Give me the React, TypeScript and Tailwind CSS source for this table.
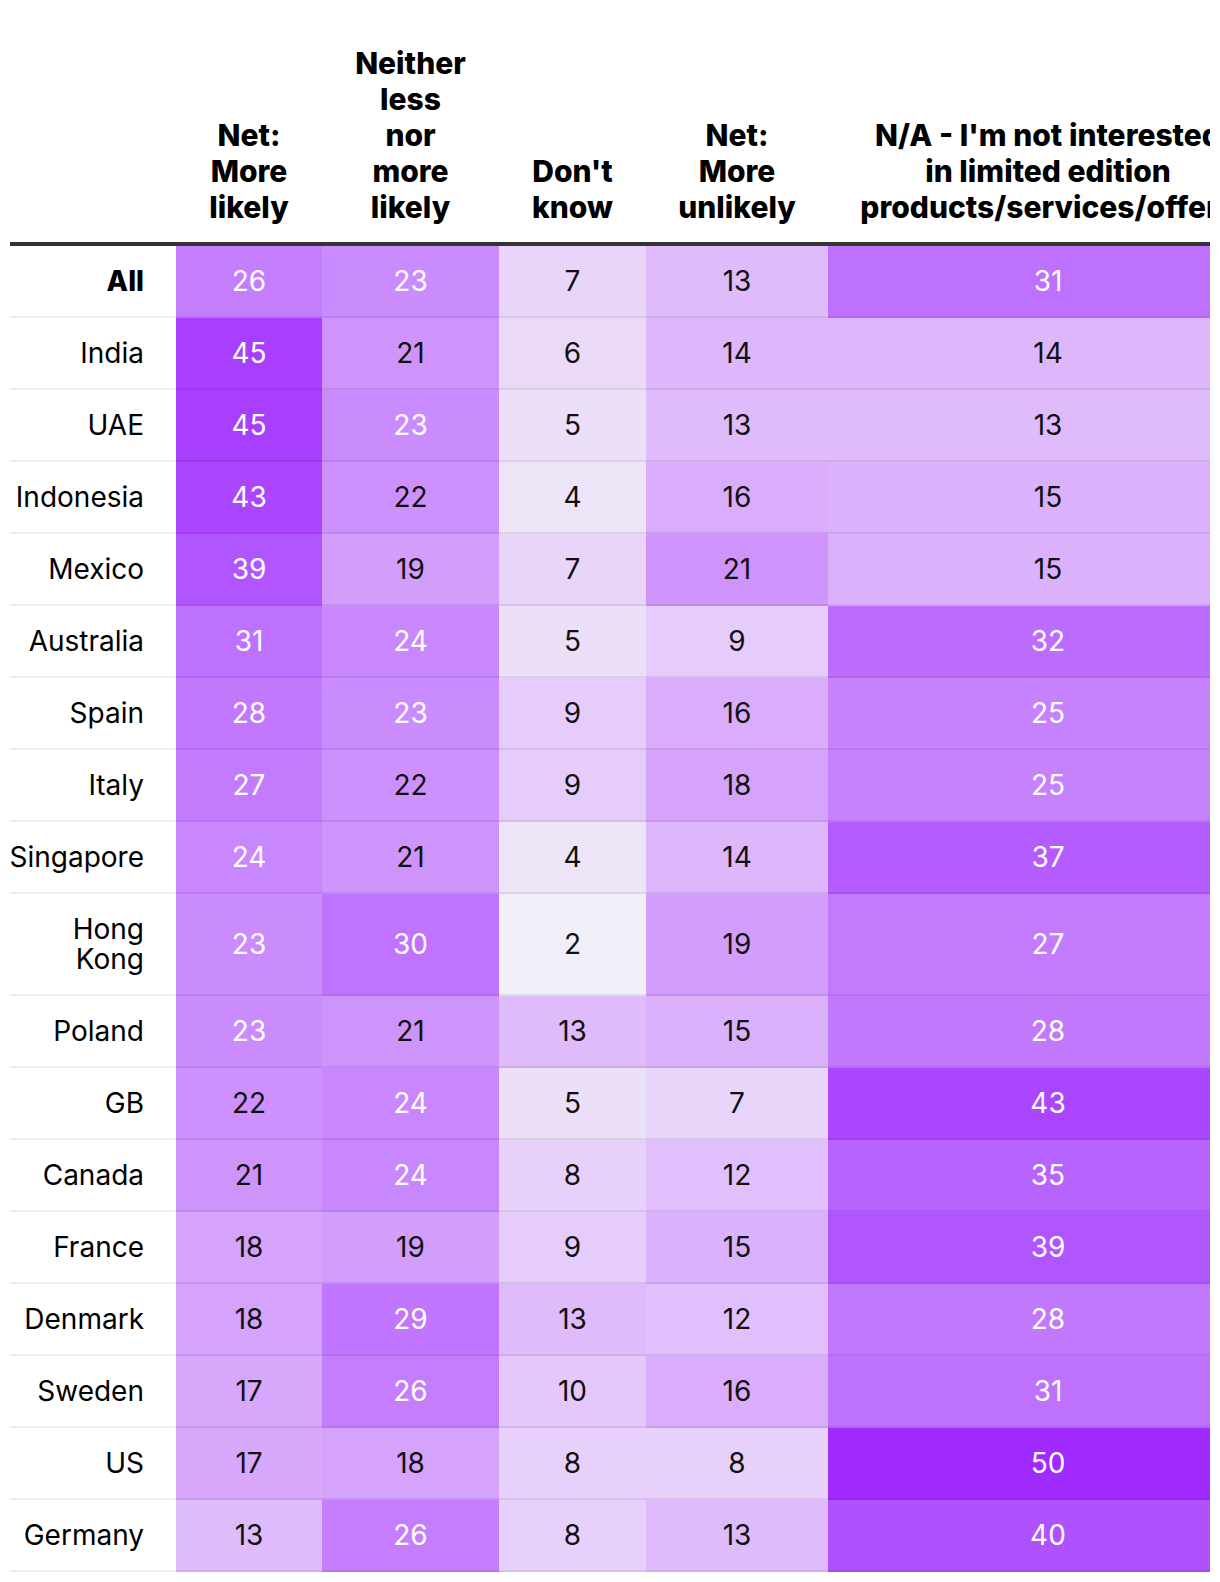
type Row = { label: string; bold?: boolean; tall?: boolean; values: number[] }

const rows: Row[] = [
  { label: 'All', bold: true, values: [26, 23, 7, 13, 31] },
  { label: 'India', values: [45, 21, 6, 14, 14] },
  { label: 'UAE', values: [45, 23, 5, 13, 13] },
  { label: 'Indonesia', values: [43, 22, 4, 16, 15] },
  { label: 'Mexico', values: [39, 19, 7, 21, 15] },
  { label: 'Australia', values: [31, 24, 5, 9, 32] },
  { label: 'Spain', values: [28, 23, 9, 16, 25] },
  { label: 'Italy', values: [27, 22, 9, 18, 25] },
  { label: 'Singapore', values: [24, 21, 4, 14, 37] },
  { label: 'Hong\nKong', tall: true, values: [23, 30, 2, 19, 27] },
  { label: 'Poland', values: [23, 21, 13, 15, 28] },
  { label: 'GB', values: [22, 24, 5, 7, 43] },
  { label: 'Canada', values: [21, 24, 8, 12, 35] },
  { label: 'France', values: [18, 19, 9, 15, 39] },
  { label: 'Denmark', values: [18, 29, 13, 12, 28] },
  { label: 'Sweden', values: [17, 26, 10, 16, 31] },
  { label: 'US', values: [17, 18, 8, 8, 50] },
  { label: 'Germany', values: [13, 26, 8, 13, 40] },
]

const headers = [
  ['Net:', 'More', 'likely'],
  ['Neither', 'less', 'nor', 'more', 'likely'],
  ["Don't", 'know'],
  ['Net:', 'More', 'unlikely'],
  ["N/A - I'm not interested", 'in limited edition', 'products/services/offers'],
]

// colour stops sampled along the scale (value -> rgb)
const stops: [number, number[]][] = [
  [2, [240, 238, 246]],
  [7, [233, 213, 249]],
  [13, [223, 187, 252]],
  [19, [211, 157, 252]],
  [26, [196, 126, 253]],
  [31, [190, 112, 254]],
  [37, [180, 92, 254]],
  [45, [168, 63, 254]],
  [50, [161, 42, 255]],
]

function heat(v: number) {
  for (let i = 1; i < stops.length; i++) {
    const [v0, c0] = stops[i - 1]
    const [v1, c1] = stops[i]
    if (v <= v1) {
      const t = (v - v0) / (v1 - v0)
      const c = c0.map((x, k) => Math.round(x + (c1[k] - x) * t))
      return `rgb(${c[0]}, ${c[1]}, ${c[2]})`
    }
  }
  return 'rgb(161, 42, 255)'
}

const cols = 'grid grid-cols-[166px_146px_177px_147px_182px_440px]'

export default function App() {
  return (
    <div className="min-h-screen bg-white pt-[45px] font-['Inter',sans-serif] text-black">
      <div className="ml-[10px] w-[1200px] overflow-hidden">
        <div className="w-[1258px]">
          <div className={`${cols} items-end border-b-4 border-[#333333] pb-[17px]`}>
            <div />
            {headers.map((lines, i) => (
              <div key={i} className="text-center text-[30px] leading-[36px] font-extrabold whitespace-nowrap">
                {lines.map((l) => (
                  <div key={l}>{l}</div>
                ))}
              </div>
            ))}
          </div>

          {rows.map((row) => (
            <div key={row.label} className={`${cols} ${row.tall ? 'h-[102px]' : 'h-[72px]'}`}>
              <div
                className={`flex items-center justify-end whitespace-pre-line border-b-2 border-black/[0.07] pr-[32px] text-right text-[28px] leading-[30px] ${
                  row.bold ? 'font-extrabold' : 'font-normal'
                }`}
              >
                {row.label}
              </div>
              {row.values.map((v, i) => (
                <div
                  key={i}
                  className={`flex items-center justify-center border-b-2 border-black/[0.07] text-[28px] ${
                    v >= 23 ? 'text-white' : 'text-[#111111]'
                  }`}
                  style={{ backgroundColor: heat(v) }}
                >
                  {v}
                </div>
              ))}
            </div>
          ))}
        </div>
      </div>
    </div>
  )
}
